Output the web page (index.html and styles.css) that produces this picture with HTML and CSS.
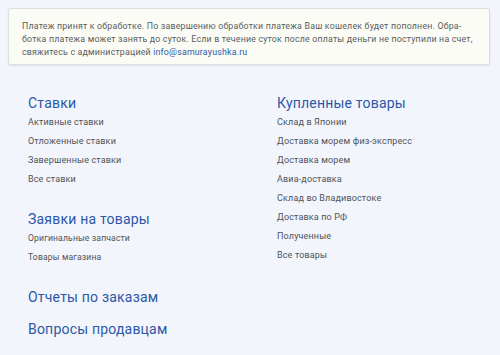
FILE: index.html
```html
<!DOCTYPE html>
<html lang="ru">
<head>
<meta charset="utf-8">
<title>Личный кабинет</title>
<link rel="stylesheet" href="styles.css">
</head>
<body>
  <div class="notice">
    Платеж принят к обработке. По завершению обработки платежа Ваш кошелек будет пополнен. Обра&shy;ботка платежа может занять до суток. Если в течение суток после оплаты деньги не поступили на счет, свяжитесь с администрацией <a href="#">info@samurayushka.ru</a>
  </div>

  <div class="menu">
    <div class="col">
      <div class="group">
        <a class="title" href="#">Ставки</a>
        <ul>
          <li><a href="#">Активные ставки</a></li>
          <li><a href="#">Отложенные ставки</a></li>
          <li><a href="#">Завершенные ставки</a></li>
          <li><a href="#">Все ставки</a></li>
        </ul>
      </div>
      <div class="group">
        <a class="title" href="#">Заявки на товары</a>
        <ul class="small">
          <li><a href="#">Оригинальные запчасти</a></li>
          <li><a href="#">Товары магазина</a></li>
        </ul>
      </div>
      <div class="group">
        <a class="title" href="#">Отчеты по заказам</a>
      </div>
      <div class="group">
        <a class="title" href="#">Вопросы продавцам</a>
      </div>
    </div>

    <div class="col">
      <div class="group">
        <a class="title" href="#">Купленные товары</a>
        <ul>
          <li><a href="#">Склад в Японии</a></li>
          <li><a href="#">Доставка морем физ-экспресс</a></li>
          <li><a href="#">Доставка морем</a></li>
          <li><a href="#">Авиа-доставка</a></li>
          <li><a href="#">Склад во Владивостоке</a></li>
          <li><a href="#">Доставка по РФ</a></li>
          <li><a href="#">Полученные</a></li>
          <li><a href="#">Все товары</a></li>
        </ul>
      </div>
    </div>
  </div>
</body>
</html>
```

FILE: styles.css
```css
* { box-sizing: border-box; }

body {
  margin: 0;
  background: #f2f5fc;
  font-family: Roboto, "Noto Sans", "DejaVu Sans", sans-serif;
  color: #555a60;
}

a { text-decoration: none; }

.notice {
  margin: 8px 10px 0 8px;
  padding: 11px 10px 5px 13px;
  background: #fbfcf5;
  border: 1px solid #dcdfdc;
  border-radius: 2px;
  box-shadow: 0 1px 2px rgba(0, 0, 0, 0.08);
  font-size: 8.8px;
  letter-spacing: 0.2px;
  line-height: 13px;
  color: #5a5d5e;
  hyphens: manual;
}

.notice a { color: #2c5aa8; }

.menu {
  display: flex;
  padding: 28px 0 0 28px;
}

.col {
  display: flex;
  flex-direction: column;
  gap: 12px;
}

.col:first-child { flex: 0 0 249px; }
.col:last-child { flex: 1 1 auto; }

.title {
  display: block;
  font-size: 14px;
  letter-spacing: 0.2px;
  line-height: 20px;
  color: #2c58a6;
}

ul {
  list-style: none;
  margin: 0;
  padding: 0 0 8px 0;
}

li {
  font-size: 9px;
  letter-spacing: 0.15px;
  line-height: 19px;
}

li a { color: #4f5358; }

ul.small li { font-size: 8.6px; }
```
